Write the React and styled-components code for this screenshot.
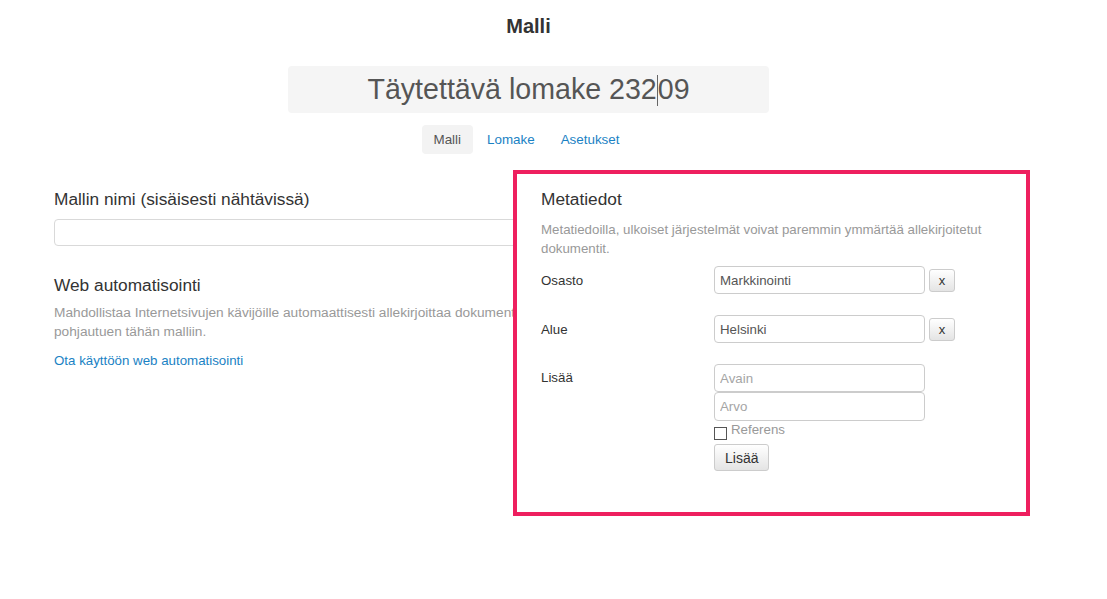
import React from 'react';
import styled, { createGlobalStyle } from 'styled-components';

const GlobalStyle = createGlobalStyle`
  html, body {
    margin: 0;
    padding: 0;
    background: #fff;
  }
  body {
    font-family: "Liberation Sans", Arial, sans-serif;
    font-size: 13px;
    color: #333;
  }
  * { box-sizing: border-box; }
`;

const Page = styled.div`
  width: 1107px;
  height: 599px;
  overflow: hidden;
`;

const Container = styled.div`
  width: 949px;
  margin-left: 54px;
  display: flex;
  flex-direction: column;
  align-items: center;
`;

const PageTitle = styled.h1`
  margin: 16px 0 0;
  font-size: 20px;
  line-height: 21px;
  font-weight: bold;
  color: #333;
`;

const TitleBox = styled.div`
  margin-top: 29px;
  width: 481px;
  height: 47px;
  background: #f5f5f5;
  border-radius: 4px;
  display: flex;
  align-items: center;
  justify-content: center;
  font-size: 28.6px;
  color: #555;
`;

const Caret = styled.span`
  display: inline-block;
  width: 1px;
  height: 31px;
  background: #666;
  vertical-align: middle;
`;

const Tabs = styled.nav`
  margin-top: 12px;
  margin-right: 4px;
  display: flex;
  gap: 2px;
`;

const Tab = styled.a`
  display: block;
  padding: 6px 12px;
  line-height: 17px;
  font-size: 13.4px;
  border-radius: 4px;
  text-decoration: none;
  color: ${p => (p.$active ? '#555' : '#1a82c4')};
  background: ${p => (p.$active ? '#f3f3f3' : 'transparent')};
`;

const Main = styled.div`
  align-self: stretch;
  margin-top: 16px;
  display: grid;
  grid-template-columns: 459px 517px;
`;

const LeftColumn = styled.div`
  width: 520px;
  padding-top: 18px;
`;

const Heading = styled.h2`
  margin: ${p => p.$top || 0}px 0 0;
  font-size: 17.3px;
  line-height: 22px;
  font-weight: normal;
  color: #333;
`;

const WideInput = styled.div`
  margin-top: 9px;
  height: 27px;
  border: 1px solid #d9d9d9;
  border-radius: 4px;
`;

const Muted = styled.p`
  margin: ${p => p.$top || 0}px 0 0;
  font-size: ${p => p.$fs || 13.3}px;
  line-height: 19px;
  color: #999;
`;

const Link = styled.a`
  display: block;
  margin-top: 10px;
  line-height: 19px;
  font-size: 13.3px;
  color: #1a82c4;
  text-decoration: none;
`;

const Card = styled.section`
  position: relative;
  z-index: 1;
  height: 346px;
  background: #fff;
  border: 4px solid #ee1f5f;
  padding: 14px 24px 0 24px;
`;

const Form = styled.div`
  margin-top: 8px;
  display: flex;
  flex-direction: column;
  gap: 21px;
`;

const Row = styled.div`
  display: grid;
  grid-template-columns: 173px 1fr;
  align-items: ${p => (p.$top ? 'start' : 'center')};
`;

const Label = styled.span`
  font-size: 13.3px;
  color: #333;
  line-height: ${p => (p.$top ? 28 : 26)}px;
  padding-top: ${p => (p.$top ? 0 : 2)}px;
`;

const Field = styled.div`
  display: flex;
  align-items: center;
  gap: 4px;
`;

const Stack = styled.div`
  display: flex;
  flex-direction: column;
  align-items: flex-start;
`;

const Input = styled.input`
  width: 211px;
  height: ${p => p.$h || 28}px;
  margin: 0;
  padding: 0 5px;
  border: 1px solid #ccc;
  border-radius: 4px;
  font-family: inherit;
  font-size: 13.3px;
  color: #555;
  background: #fff;
  outline: none;
  &::placeholder { color: #a5a5a5; }
`;

const Button = styled.button`
  height: ${p => p.$h || 23}px;
  min-width: 26px;
  padding: 0 ${p => p.$px || 8}px;
  margin: 0;
  border: 1px solid #ccc;
  border-radius: 3px;
  background: linear-gradient(#fff, #e4e4e4);
  font-family: inherit;
  font-size: ${p => p.$fs || 13}px;
  color: #333;
`;

const CheckRow = styled.label`
  margin-top: 6px;
  display: flex;
  align-items: flex-start;
  gap: 4px;
  color: #999;
  font-size: 13.3px;
  line-height: 13px;
`;

const Box = styled.span`
  display: block;
  width: 13px;
  height: 13px;
  border: 1px solid #555;
  background: #fff;
`;

const CheckText = styled.span`
  margin-top: -4px;
`;

const AddButton = styled(Button)`
  margin-top: 4px;
`;

export default function App() {
  return (
    <Page>
      <GlobalStyle />
      <Container>
        <PageTitle>Malli</PageTitle>
        <TitleBox>
          <span>Täytettävä lomake 232<Caret />09</span>
        </TitleBox>
        <Tabs>
          <Tab $active href="#">Malli</Tab>
          <Tab href="#">Lomake</Tab>
          <Tab href="#">Asetukset</Tab>
        </Tabs>
        <Main>
          <LeftColumn>
            <Heading>Mallin nimi (sisäisesti nähtävissä)</Heading>
            <WideInput />
            <Heading $top={28}>Web automatisointi</Heading>
            <Muted $top={7} $fs={13.7}>
              Mahdollistaa Internetsivujen kävijöille automaattisesti allekirjoittaa dokumentit
              pohjautuen tähän malliin.
            </Muted>
            <Link href="#">Ota käyttöön web automatisointi</Link>
          </LeftColumn>
          <Card>
            <Heading>Metatiedot</Heading>
            <Muted $top={10}>
              Metatiedoilla, ulkoiset järjestelmät voivat paremmin ymmärtää allekirjoitetut dokumentit.
            </Muted>
            <Form>
              <Row>
                <Label>Osasto</Label>
                <Field>
                  <Input defaultValue="Markkinointi" />
                  <Button>x</Button>
                </Field>
              </Row>
              <Row>
                <Label>Alue</Label>
                <Field>
                  <Input defaultValue="Helsinki" />
                  <Button>x</Button>
                </Field>
              </Row>
              <Row $top>
                <Label $top>Lisää</Label>
                <Stack>
                  <Input placeholder="Avain" />
                  <Input placeholder="Arvo" $h={29} />
                  <CheckRow>
                    <Box />
                    <CheckText>Referens</CheckText>
                  </CheckRow>
                  <AddButton $h={27} $px={10} $fs={14}>Lisää</AddButton>
                </Stack>
              </Row>
            </Form>
          </Card>
        </Main>
      </Container>
    </Page>
  );
}
